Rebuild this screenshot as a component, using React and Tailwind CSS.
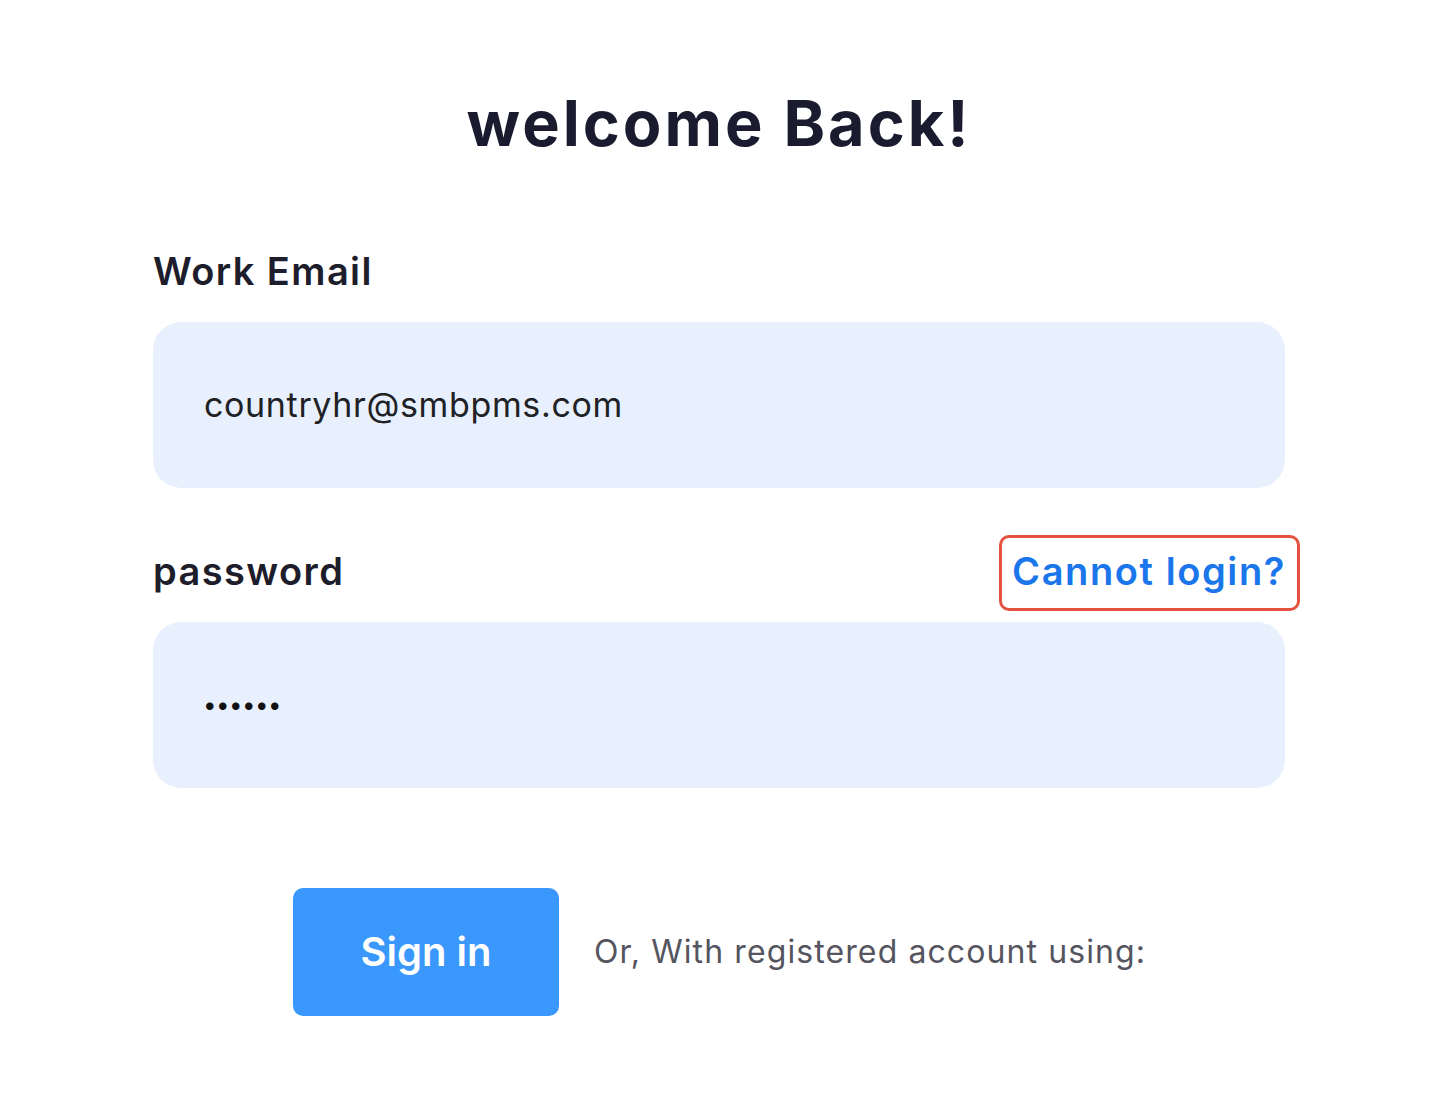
export default function App() {
  return (
    <div className="min-h-[1095px] w-full bg-white font-['Inter',sans-serif]">
      <div className="w-[1132px] ml-[153px] pt-[92px] flex flex-col">
        <h1 className="text-center text-[63px] leading-none font-bold tracking-[3px] text-[#1a1b2e]">
          welcome Back!
        </h1>

        <label className="mt-[97px] text-[38px] leading-none font-semibold text-[#1d1d2b] tracking-[1.4px]">
          Work Email
        </label>
        <div className="mt-[32px] h-[166px] rounded-[28px] bg-[#e8f0fe] flex items-center pl-[51px]">
          <span className="text-[34px] leading-none text-[#202124] tracking-[0.65px]">countryhr@smbpms.com</span>
        </div>

        <div className="mt-[64px] flex items-baseline justify-between">
          <label className="text-[38px] leading-none font-semibold text-[#1d1d2b] tracking-[1.4px]">password</label>
          <span className="relative -mr-[1px] text-[38px] leading-none font-semibold text-[#1a76ea] tracking-[1.6px]">
            Cannot login?
            <span className="absolute -left-[13px] -right-[14px] -top-[17px] -bottom-[21px] border-[3px] border-[#e4533f] rounded-[10px]" />
          </span>
        </div>
        <div className="mt-[32px] h-[166px] rounded-[28px] bg-[#e8f0fe] flex items-center pl-[50px]">
          <span className="text-[24px] leading-none text-[#111] -tracking-[0.5px]">••••••</span>
        </div>

        <div className="mt-[100px] ml-[140px] flex items-center gap-[35px]">
          <button className="w-[266px] h-[128px] rounded-[10px] bg-[#3a98fd] text-white text-[40px] font-semibold leading-none">
            Sign in
          </button>
          <span className="text-[32px] leading-none text-[#55555f] tracking-[1.1px]">
            Or, With registered account using:
          </span>
        </div>
      </div>
    </div>
  );
}
